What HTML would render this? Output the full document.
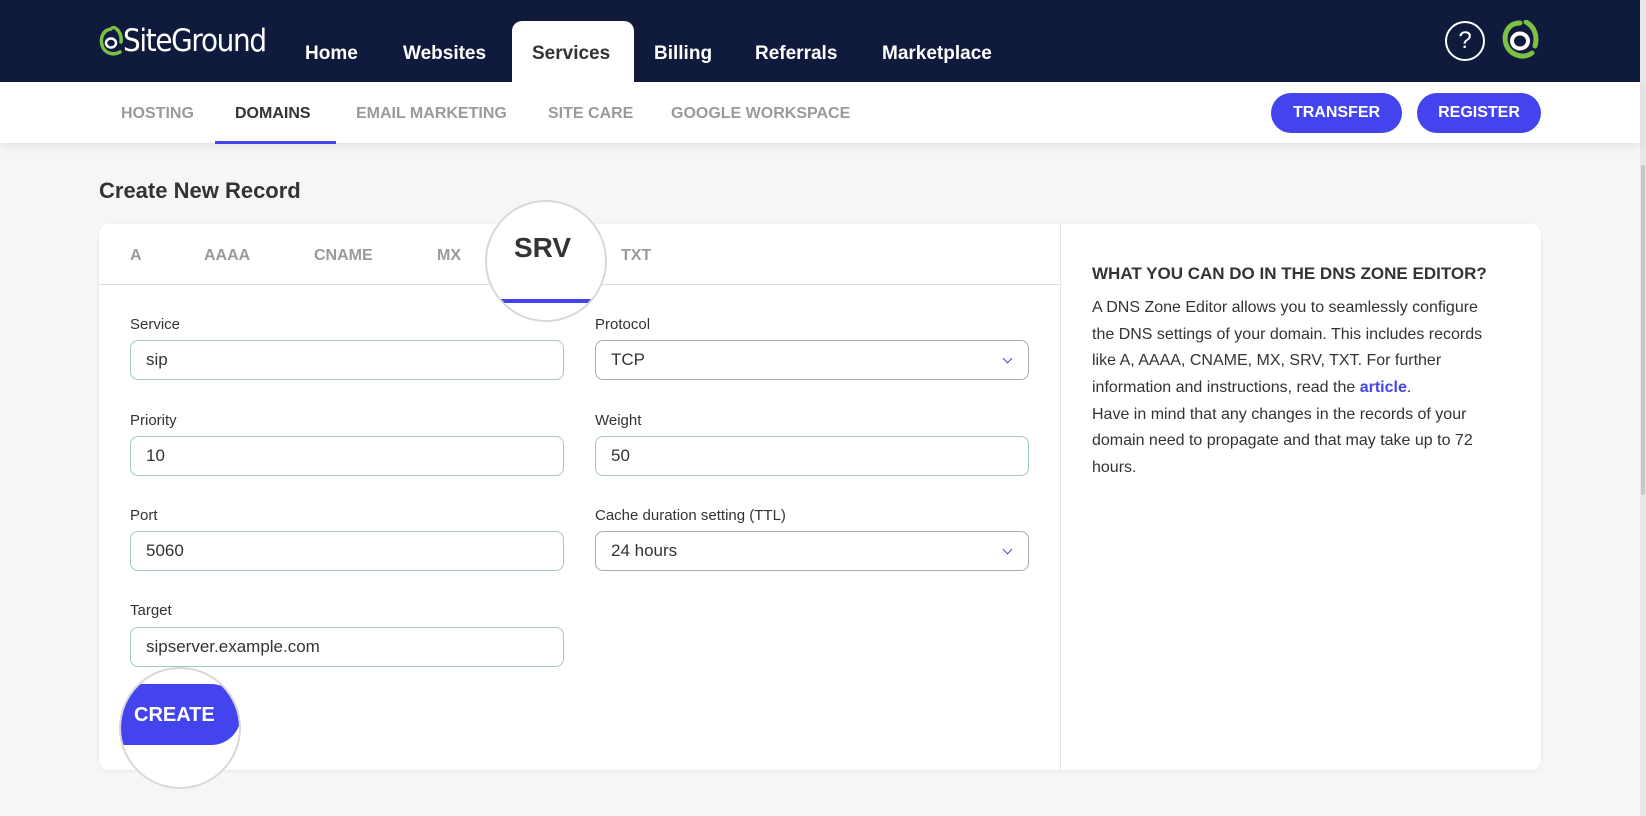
<!DOCTYPE html>
<html><head><meta charset="utf-8"><style>
*{margin:0;padding:0;box-sizing:border-box}
body{width:1646px;height:816px;overflow:hidden;background:#f6f6f6;font-family:"Liberation Sans",sans-serif;position:relative;color:#333}
.a{position:absolute;white-space:nowrap}
.nav{position:absolute;left:0;top:0;width:1640px;height:82px;background:#0f1a3c}
.ni{position:absolute;top:40px;font-size:19px;font-weight:bold;color:#fff;line-height:28px}
.sub{position:absolute;left:0;top:82px;width:1640px;height:61px;background:#fff;box-shadow:0 4px 8px rgba(0,0,0,.08)}
.si{position:absolute;top:104px;font-size:16px;font-weight:bold;color:#9a9a9a;line-height:20px}
.btn{position:absolute;top:93px;height:40px;border-radius:20px;background:#4444ee;color:#fff;font-weight:bold;font-size:16px;text-align:center;line-height:40px}
.card{position:absolute;left:99px;top:224px;width:1442px;height:546px;background:#fff;border-radius:10px;box-shadow:0 1px 4px rgba(0,0,0,.06)}
.tab{position:absolute;top:246px;font-size:16px;font-weight:bold;color:#9a9a9a;line-height:20px}
.lb{position:absolute;font-size:15px;color:#333;line-height:20px}
.in{position:absolute;width:434px;height:40px;border:1px solid #9fd0b4;border-radius:8px;font-size:17px;line-height:38px;padding-left:15px;color:#333;background:#fff}
.sel{border-color:#aaa}
.chev{position:absolute;right:17px;top:14px;width:7px;height:7px;border-right:1.6px solid #4444ee;border-bottom:1.6px solid #4444ee;transform:rotate(45deg)}
.p{position:absolute;left:1092px;font-size:16px;line-height:20px;color:#333}
</style></head><body>
<div class="nav"></div>
<div style="position:absolute;left:1640px;top:0;width:6px;height:816px;background:#e8e8e8"></div>
<div style="position:absolute;left:1641px;top:165px;width:4px;height:330px;background:#c8c8c8;border-radius:2px"></div>
<svg class="a" style="left:99px;top:26px" width="24" height="34" viewBox="0 0 24 34"><path d="M12 3 C4 4 1 12 3 19 C5 27 14 30 21 26 M14 1 C20 3 23 10 22 16" fill="none" stroke="#7cc242" stroke-width="3.5" stroke-linecap="round"/><ellipse cx="12" cy="17" rx="5" ry="4.5" fill="none" stroke="#fff" stroke-width="2.5"/></svg>
<div class="a" style="left:123px;top:23px;font-family:'DejaVu Sans',sans-serif;font-size:31px;color:#fff;letter-spacing:-1.5px;transform:scaleX(.9);transform-origin:left">SiteGround</div>
<div style="position:absolute;left:512px;top:21px;width:122px;height:61px;background:#fff;border-radius:10px 10px 0 0"></div>
<div class="ni" style="left:305px">Home</div>
<div class="ni" style="left:403px">Websites</div>
<div class="ni" style="left:532px;color:#333">Services</div>
<div class="ni" style="left:654px">Billing</div>
<div class="ni" style="left:755px">Referrals</div>
<div class="ni" style="left:882px">Marketplace</div>
<div class="a" style="left:1445px;top:21px;width:40px;height:40px;border:2px solid #fff;border-radius:50%;color:#fff;font-size:24px;text-align:center;line-height:36px">?</div>
<svg class="a" style="left:1500px;top:20px" width="40" height="42" viewBox="0 0 40 42"><path d="M20 3 C8 3 3 14 6 24 C9 34 22 40 32 33 M26 2 C34 6 38 16 35 26" fill="none" stroke="#7cc242" stroke-width="5" stroke-linecap="round"/><ellipse cx="20" cy="21" rx="8" ry="7.5" fill="none" stroke="#fff" stroke-width="4"/></svg>
<div class="sub"></div>
<div class="si" style="left:121px">HOSTING</div>
<div class="si" style="left:235px;color:#333">DOMAINS</div>
<div style="position:absolute;left:215px;top:141px;width:121px;height:3px;background:#4444ee"></div>
<div class="si" style="left:356px">EMAIL MARKETING</div>
<div class="si" style="left:548px">SITE CARE</div>
<div class="si" style="left:671px">GOOGLE WORKSPACE</div>
<div class="btn" style="left:1271px;width:131px">TRANSFER</div>
<div class="btn" style="left:1417px;width:124px">REGISTER</div>
<div class="a" style="left:99px;top:178px;font-size:22px;font-weight:bold;color:#333">Create New Record</div>
<div class="card"></div>
<div style="position:absolute;left:1060px;top:224px;width:1px;height:546px;background:#e6e6e6"></div>
<div style="position:absolute;left:99px;top:284px;width:961px;height:1px;background:#ddd"></div>
<div class="tab" style="left:130px">A</div>
<div class="tab" style="left:204px">AAAA</div>
<div class="tab" style="left:314px">CNAME</div>
<div class="tab" style="left:437px">MX</div>
<div class="tab" style="left:621px">TXT</div>
<div style="position:absolute;left:485px;top:200px;width:122px;height:122px;border-radius:50%;background:#fff;border:2px solid #d8d8d8;overflow:hidden">
<div class="a" style="left:27px;top:30px;font-size:28px;font-weight:bold;color:#333">SRV</div>
<div style="position:absolute;left:0;top:97px;width:122px;height:4px;background:#4444ee"></div>
</div>
<div class="lb" style="left:130px;top:315px">Service</div>
<div class="in" style="left:130px;top:340px">sip</div>
<div class="lb" style="left:595px;top:315px">Protocol</div>
<div class="in sel" style="left:595px;top:340px">TCP<div class="chev"></div></div>
<div class="lb" style="left:130px;top:411px">Priority</div>
<div class="in" style="left:130px;top:436px">10</div>
<div class="lb" style="left:595px;top:411px">Weight</div>
<div class="in" style="left:595px;top:436px">50</div>
<div class="lb" style="left:130px;top:506px">Port</div>
<div class="in" style="left:130px;top:531px">5060</div>
<div class="lb" style="left:595px;top:506px">Cache duration setting (TTL)</div>
<div class="in sel" style="left:595px;top:531px">24 hours<div class="chev"></div></div>
<div class="lb" style="left:130px;top:601px">Target</div>
<div class="in" style="left:130px;top:627px">sipserver.example.com</div>
<div style="position:absolute;left:119px;top:667px;width:122px;height:122px;border-radius:50%;background:#fff;border:2px solid #d8d8d8;overflow:hidden">
<div style="position:absolute;left:-30px;top:15px;width:150px;height:61px;background:#4444ee;border-radius:0 30px 30px 0"></div>
<div class="a" style="left:13px;top:35px;font-size:20px;font-weight:bold;color:#fff">CREATE</div>
</div>
<div class="a" style="left:1092px;top:264px;font-size:17px;font-weight:bold;color:#333">WHAT YOU CAN DO IN THE DNS ZONE EDITOR?</div>
<div class="p" style="top:298px">A DNS Zone Editor allows you to seamlessly configure</div>
<div class="p" style="top:325px">the DNS settings of your domain. This includes records</div>
<div class="p" style="top:351px">like A, AAAA, CNAME, MX, SRV, TXT. For further</div>
<div class="p" style="top:378px">information and instructions, read the <b style="color:#4444ee">article</b>.</div>
<div class="p" style="top:405px">Have in mind that any changes in the records of your</div>
<div class="p" style="top:431px">domain need to propagate and that may take up to 72</div>
<div class="p" style="top:458px">hours.</div>
</body></html>
